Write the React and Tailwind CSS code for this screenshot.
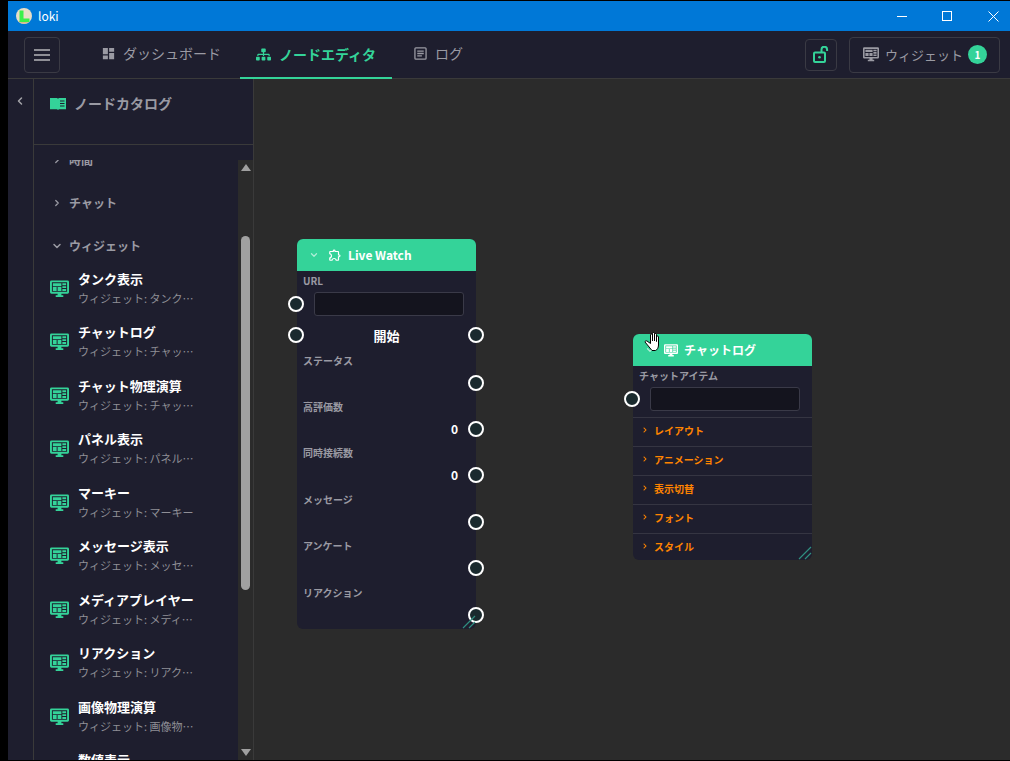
import React from "react";
import { MdDashboard, MdOutlineExtension } from "react-icons/md";
import { FaSitemap, FaChevronRight } from "react-icons/fa";
import { LuChevronLeft, LuChevronRight, LuChevronDown } from "react-icons/lu";

const font = { fontFamily: '"Noto Sans CJK JP", "Noto Sans", sans-serif' };

const Monitor = ({ className }) => (
  <svg viewBox="0 0 20 18" className={className} fill="currentColor">
    <path d="M1.500 0h17A1.500 1.500 0 0 1 20 1.500v11a1.500 1.500 0 0 1-1.500 1.500H12v1.500h2V17.500H6V15.500h2V14H1.500A1.500 1.500 0 0 1 0 12.500v-11A1.500 1.500 0 0 1 1.500 0zM2 2v10h16V2z" fillRule="evenodd" />
    <path d="M3 3h9v3H3zM13 3h4v2h-4zM3 7h4v4H3zM8 7h4v4H8zM13 6h4v2h-4zM13 9h4v2h-4z" />
  </svg>
);

const LogIcon = ({ className }) => (
  <svg viewBox="0 0 14 14" className={className} fill="none" stroke="currentColor" strokeWidth="1.400">
    <rect x="1" y="1" width="12" height="12" rx="1" />
    <path d="M3.500 4.500h7M3.500 7h7M3.500 9.500h5" />
  </svg>
);

const BookIcon = ({ className }) => (
  <svg viewBox="0 0 16 12" className={className} fill="currentColor">
    <path fillRule="evenodd" d="M0 0h7l1 .8L9 0h7v11.200H9L8 12l-1-.8H0zM10 2.500v1h4.500v-1zM10 5v1h4.500V5zM10 7.500v1h4.500v-1z" />
  </svg>
);

const OpenLock = ({ className }) => (
  <svg viewBox="0 0 16 17" className={className} fill="none" stroke="currentColor" strokeWidth="2">
    <rect x="1" y="6.500" width="11" height="9.500" rx="1" />
    <path d="M8.500 6V3.500a2.800 2.800 0 0 1 5.600 0V5" />
    <circle cx="6.500" cy="11.200" r="1.300" fill="currentColor" stroke="none" />
  </svg>
);

const Logo = () => (
  <svg viewBox="0 0 16 16" className="w-4 h-4 ml-2 shrink-0">
    <circle cx="8" cy="8" r="8" fill="#e9dfc6" />
    <path d="M2 13a8 8 0 0 0 12 0z" fill="#d9b98a" />
    <path d="M3.500 2.500h4v8h6v3.500h-10z" fill="#3cf04a" />
  </svg>
);

const HandCursor = () => (
  <svg viewBox="0 0 15 19" className="absolute left-[10px] top-[-2px] w-[17px] h-[19px] z-10">
    <path
      d="M6.500 10V3a1 1 0 0 1 2 0v6-7.500a1 1 0 0 1 2 0V9V2.500a1 1 0 0 1 2 0V9.500V5a1 1 0 0 1 2 0v8c0 3-1.500 5-3 5.500H8L1 10c0-1 1-1.500 2-1l3.500 2.500z"
      fill="#fff"
      stroke="#000"
      strokeWidth="1"
      strokeLinejoin="round"
    />
  </svg>
);

const widgets = [
  ["タンク表示", "ウィジェット: タンク…"],
  ["チャットログ", "ウィジェット: チャッ…"],
  ["チャット物理演算", "ウィジェット: チャッ…"],
  ["パネル表示", "ウィジェット: パネル…"],
  ["マーキー", "ウィジェット: マーキー"],
  ["メッセージ表示", "ウィジェット: メッセ…"],
  ["メディアプレイヤー", "ウィジェット: メディ…"],
  ["リアクション", "ウィジェット: リアク…"],
  ["画像物理演算", "ウィジェット: 画像物…"],
  ["数値表示", "ウィジェット: 数値…"],
];

const Handle = ({ side }) => (
  <span
    className={
      "absolute top-1/2 -translate-y-1/2 w-4 h-4 rounded-full border-2 border-white bg-[#1a2a2e] " +
      (side === "left" ? "left-[-9px]" : "right-[-8px]")
    }
  />
);

const NodeLabel = ({ children }) => (
  <div className="h-[20px] px-[6px] text-[10px] leading-[20px] font-bold text-[#9a9aa3]">{children}</div>
);

const NodeInput = () => (
  <div className="relative h-[24px] mt-px pl-[17px] pr-[12px]">
    <Handle side="left" />
    <div className="h-full rounded-[3px] border border-[#3a3a48] bg-[#14141e]" />
  </div>
);

const OutRow = ({ label, value, mt }) => (
  <div className={mt}>
    <NodeLabel>{label}</NodeLabel>
    <div className="relative h-[20px] mt-[2px] pr-[18px] text-right text-[12px] leading-[20px] font-bold text-white">
      {value}
      <Handle side="right" />
    </div>
  </div>
);

const Resize = () => (
  <svg viewBox="0 0 14 14" className="absolute right-0 bottom-0 w-[14px] h-[14px]" stroke="#2f8f80" strokeWidth="1.200">
    <path d="M1 13 L13 1M7 13 L13 7" />
  </svg>
);

const App = () => {
  return (
    <div className="w-[1010px] h-[761px] overflow-hidden bg-black pl-2 pt-px flex flex-col text-white" style={font}>
      <div className="h-[30px] flex items-center bg-[#0078d7] shrink-0">
        <Logo />
        <span className="ml-[6px] text-[12px] text-white">loki</span>
        <div className="ml-auto mr-[-6px] flex items-center h-full">
          <span className="w-[45px] flex justify-center"><span className="w-[10px] h-px bg-white" /></span>
          <span className="w-[46px] flex justify-center"><span className="w-[10px] h-[10px] border border-white" /></span>
          <span className="w-[46px] flex justify-center">
            <svg viewBox="0 0 11 11" className="w-[11px] h-[11px]" stroke="#fff" strokeWidth="1"><path d="M0.500 0.500l10 10M10.500 0.500l-10 10" /></svg>
          </span>
        </div>
      </div>

      <div className="h-[48px] shrink-0 flex items-center bg-[#1e1e2e] border-b border-[#3a3a3a]">
        <button className="ml-4 w-9 h-9 rounded-[4px] border border-[#3a3a44] flex items-center justify-center">
          <span className="w-4 flex flex-col gap-[3px]">
            <span className="h-[2px] bg-[#8f8f96]" />
            <span className="h-[2px] bg-[#8f8f96]" />
            <span className="h-[2px] bg-[#8f8f96]" />
          </span>
        </button>
        <div className="ml-[20px] flex h-full">
          <div className="w-[160px] flex items-center pl-[21px] gap-[7px] text-[14px] text-[#9a9aa3] pb-[2px]">
            <MdDashboard className="w-[15px] h-[15px]" />
            ダッシュボード
          </div>
          <div className="w-[152px] flex items-center justify-center gap-2 text-[14px] font-bold text-[#34d399] border-b-2 border-[#34d399] mb-[-1px]">
            <FaSitemap className="w-[15px] h-[15px]" />
            ノードエディタ
          </div>
          <div className="pl-[22px] flex items-center gap-[8px] text-[14px] text-[#9a9aa3] pb-[2px]">
            <LogIcon className="w-[13px] h-[13px]" />
            ログ
          </div>
        </div>
        <button className="ml-auto w-8 h-8 rounded-[4px] border border-[#3a3a44] flex items-center justify-center text-[#34d399]">
          <OpenLock className="w-[16px] h-[17px]" />
        </button>
        <button className="ml-[12px] mr-[10px] w-[151px] h-9 rounded-[4px] border border-[#3a3a44] flex items-center pl-[13px] gap-[6px] text-[13px] text-[#9a9aa3]">
          <Monitor className="w-[16px] h-[15px]" />
          ウィジェット
          <span className="ml-[-1px] w-[19px] h-[19px] rounded-full bg-[#34d399] text-white text-[10px] font-bold flex items-center justify-center">1</span>
        </button>
      </div>

      <div className="flex-1 min-h-0 flex mb-px">
        <div className="w-[26px] shrink-0 bg-[#1e1e2e] border-r border-[#3a3a3a] pl-[6px] pt-[16px] text-[#a3a3a8]">
          <LuChevronLeft className="w-[12px] h-[12px]" strokeWidth={3} />
        </div>

        <div className="w-[220px] shrink-0 bg-[#1e1e2e] border-r border-[#3a3a3a] flex flex-col">
          <div className="h-[66px] shrink-0 border-b border-[#3a3a3a] pl-[16px] pt-[12px] flex items-start gap-2 text-[14px] leading-[24px] font-bold text-[#9a9aa3]">
            <BookIcon className="w-[16px] h-[12px] mt-[7px] text-[#34d399]" />
            ノードカタログ
          </div>
          <div className="flex-1 min-h-0 flex pt-[15px]">
            <div className="flex-1 min-w-0 overflow-hidden">
              <div className="pl-[18px] mt-[-10px] h-[20px] flex items-center gap-[7px] text-[12px] font-bold text-[#9a9aa3]">
                <LuChevronRight className="w-[10px] h-[10px]" strokeWidth={3} />
                時間
              </div>
              <div className="pl-[18px] mt-[23px] h-[20px] flex items-center gap-[7px] text-[12px] font-bold text-[#9a9aa3]">
                <LuChevronRight className="w-[10px] h-[10px]" strokeWidth={3} />
                チャット
              </div>
              <div className="pl-[17px] mt-[23px] h-[20px] flex items-center gap-[6px] text-[12px] font-bold text-[#9a9aa3]">
                <LuChevronDown className="w-[12px] h-[12px]" strokeWidth={3} />
                ウィジェット
              </div>
              <div className="mt-[6px]">
                {widgets.map(([title, sub]) => (
                  <div key={title} className="h-[53.500px] pl-[16px] flex items-center gap-[9px]">
                    <Monitor className="w-[19px] h-[18px] text-[#34d399] shrink-0" />
                    <div>
                      <div className="text-[13px] leading-[18px] font-bold text-white whitespace-nowrap -translate-y-px">{title}</div>
                      <div className="text-[11px] leading-[18px] text-[#8f8f96] whitespace-nowrap">{sub}</div>
                    </div>
                  </div>
                ))}
              </div>
            </div>
            <div className="w-[15px] shrink-0 bg-[#2b2b2b] flex flex-col items-center">
              <span className="mt-[4px] w-0 h-0 border-x-[5px] border-x-transparent border-b-[7px] border-b-[#a0a0a0]" />
              <span className="mt-[65px] w-[9px] h-[354px] rounded-full bg-[#a0a0a0]" />
              <span className="mt-auto mb-[4px] w-0 h-0 border-x-[5px] border-x-transparent border-t-[7px] border-t-[#a0a0a0]" />
            </div>
          </div>
        </div>

        <div className="relative flex-1 bg-[#2b2b2b]">
          {/* nodes sit on a free canvas */}
          <div className="absolute left-[43px] top-[160px] w-[179px] h-[390px] rounded-[6px] bg-[#1e1e2e]">
            <div className="h-[32px] rounded-t-[6px] bg-[#34d399] flex items-center pl-[12px] gap-[6px] text-[12px] font-bold">
              <LuChevronDown className="w-[10px] h-[10px] text-white/60" strokeWidth={3} />
              <MdOutlineExtension className="w-[14px] h-[14px] ml-[3px]" />
              Live Watch
            </div>
            <NodeLabel>URL</NodeLabel>
            <NodeInput />
            <div className="relative h-[20px] mt-[9px] text-center text-[13px] leading-[20px] font-bold">
              <span className="relative top-px">開始</span>
              <Handle side="left" />
              <Handle side="right" />
            </div>
            <OutRow label="ステータス" mt="mt-[6px]" />
            <OutRow label="高評価数" value="0" mt="mt-[4px]" />
            <OutRow label="同時接続数" value="0" mt="mt-[4px]" />
            <OutRow label="メッセージ" mt="mt-[5px]" />
            <OutRow label="アンケート" mt="mt-[4px]" />
            <OutRow label="リアクション" mt="mt-[5px]" />
            <Resize />
          </div>

          <div className="absolute left-[379px] top-[255px] w-[179px] h-[226px] rounded-[6px] bg-[#1e1e2e]">
            <HandCursor />
            <div className="h-[32px] rounded-t-[6px] bg-[#34d399] flex items-center pl-[12px] gap-[6px] text-[12px] font-bold">
              <LuChevronDown className="w-[10px] h-[10px] text-white/60" strokeWidth={3} />
              <Monitor className="w-[14px] h-[13px] ml-[3px]" />
              チャットログ
            </div>
            <NodeLabel>チャットアイテム</NodeLabel>
            <NodeInput />
            <div className="mt-[6px]">
              {["レイアウト", "アニメーション", "表示切替", "フォント", "スタイル"].map((t) => (
                <div key={t} className="h-[29px] border-t border-[#353542] pl-[9px] pb-[4px] flex items-center gap-[6px] text-[10px] font-bold text-[#ff8400]">
                  <FaChevronRight className="w-[6px] h-[6px]" />
                  {t}
                </div>
              ))}
            </div>
            <Resize />
          </div>
        </div>
      </div>
    </div>
  );
};

export default App;
